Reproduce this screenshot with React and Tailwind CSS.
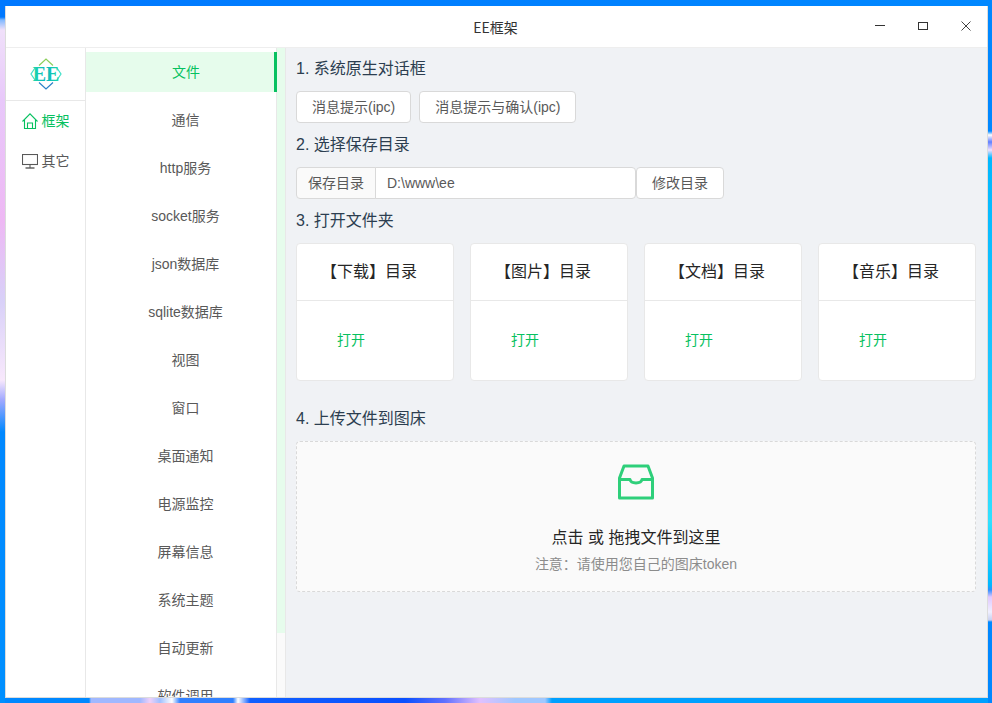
import React from 'react';

const FONT = "font-['Liberation_Sans','Noto_Sans_CJK_SC',sans-serif]";

const MENU = ['文件', '通信', 'http服务', 'socket服务', 'json数据库', 'sqlite数据库', '视图', '窗口', '桌面通知', '电源监控', '屏幕信息', '系统主题', '自动更新', '软件调用'];
const FOLDERS = ['【下载】目录', '【图片】目录', '【文档】目录', '【音乐】目录'];

const Logo = () => (
    <svg width="32" height="32" viewBox="0 0 32 32" fill="none">
        <defs>
            <linearGradient id="ee" x1="0" y1="0" x2="1" y2="0">
                <stop offset="0" stopColor="#20d8a8" />
                <stop offset="0.5" stopColor="#08b8c0" />
                <stop offset="1" stopColor="#20d8a8" />
            </linearGradient>
        </defs>
        <path d="M9 7.500 L16 1 L23 7.500" stroke="#8ccf5c" strokeWidth="1.200" />
        <path d="M9 24.500 L16 31 L23 24.500" stroke="#2a80c8" strokeWidth="1.200" />
        <path d="M5 10 L1 16 L5 22" stroke="#3fe0c8" strokeWidth="1.200" />
        <path d="M27 10 L31 16 L27 22" stroke="#3fe0c8" strokeWidth="1.200" />
        <text x="16" y="23" textAnchor="middle" fontFamily="Liberation Serif, serif" fontWeight="700" fontSize="20" fill="url(#ee)">EE</text>
    </svg>
);

const HomeIcon = () => (
    <svg width="16" height="16" viewBox="0 0 16 16" fill="none" stroke="currentColor" strokeWidth="1.100">
        <path d="M.5 8.500 L8 .8 L15.500 8.500" />
        <path d="M2.500 7 V15.500 H13.500 V7" />
        <path d="M5.500 15.500 V10 H10.500 V15.500" />
    </svg>
);

const DesktopIcon = () => (
    <svg width="16" height="15" viewBox="0 0 16 15" fill="none" stroke="currentColor" strokeWidth="1.100">
        <rect x=".5" y=".5" width="15" height="10" />
        <path d="M8 10.500 V14" />
        <path d="M3.500 14 H12.500" strokeWidth="1.400" />
    </svg>
);

const InboxIcon = () => (
    <svg width="36" height="36" viewBox="0 0 36 36" fill="none" stroke="#2ecf7a" strokeWidth="3" strokeLinejoin="round" className="block">
        <path d="M6 2 H30 L34.500 14 V34 H1.500 V14 Z" />
        <path d="M1.500 15.500 H12 C13 20 23 20 24 15.500 H34.500" />
    </svg>
);

const SectionTitle = ({ children }) => (
    <div className="text-base leading-6 text-[#2c3e50]">{children}</div>
);

const Btn = ({ children }) => (
    <button className="h-8 px-[15px] bg-white border border-[#d9d9d9] rounded text-sm text-[#595959] whitespace-nowrap">
        {children}
    </button>
);

export default function App() {
    return (
        <div className={`w-[992px] h-[703px] overflow-hidden flex ${FONT}`}>
            {/* wallpaper, left edge */}
            <div className="w-[5px] shrink-0 bg-[linear-gradient(180deg,#0078ff_0,#0078ff_17px,#80b8ff_20px,#f0e0fa_30px,#e8c8fa_100px,#eeb8f4_220px,#d8d0f8_300px,#f8e8fc_380px,#a0a8ff_400px,#0088ff_432px,#0090ff_703px)]" />
            <div className="flex-1 min-w-0 flex flex-col">
                <div className="h-[6px] shrink-0 bg-[linear-gradient(90deg,#0078ff,#0088ff)]" />
                {/* window */}
                <div className="flex-1 min-h-0 flex flex-col overflow-hidden bg-white border-x border-b border-[#dcdcdc]">
                    <div className="h-[42px] shrink-0 relative flex items-center justify-center pr-[2px] bg-white border-b border-[#eeeeee] text-sm text-[#333333] font-['Noto_Sans_CJK_SC',sans-serif]">
                        EE框架
                        <div className="absolute right-0 top-0 h-full flex items-center">
                            <div className="w-[43px] flex justify-center -translate-y-[1px]"><div className="w-[10px] h-px bg-[#333333]" /></div>
                            <div className="w-[43px] flex justify-center -translate-y-[1px]"><div className="w-[10px] h-[8px] border border-[#333333]" /></div>
                            <div className="w-[43px] flex justify-center -translate-y-[1px]">
                                <svg width="10" height="10" viewBox="0 0 10 10" stroke="#444444" strokeWidth="1"><path d="M.5.5l9 9M9.500.5l-9 9" /></svg>
                            </div>
                        </div>
                    </div>
                    <div className="flex-1 min-h-0 flex">
                        {/* first column */}
                        <div className="w-[80px] shrink-0 border-r border-[#e8e8e8]">
                            <div className="h-[53px] flex items-center justify-center border-b border-[#e8e8e8]"><Logo /></div>
                            <div className="h-10 flex items-center justify-center gap-1 text-sm text-[#07c160]">
                                <HomeIcon />框架
                            </div>
                            <div className="h-10 flex items-center justify-center gap-1 text-sm text-[#595959]">
                                <DesktopIcon />其它
                            </div>
                        </div>
                        {/* second column */}
                        <div className="w-[200px] shrink-0 flex overflow-hidden border-r border-[#e8e8e8]">
                            <div className="w-[191px] shrink-0 pt-1 shadow-[inset_-1px_0_0_#e8e8e8] overflow-hidden">
                                {MENU.map((m, i) => (
                                    <div
                                        key={m}
                                        className={i === 0
                                            ? 'h-10 mb-2 pl-[12px] flex items-center justify-center text-sm text-[#07c160] bg-[#e6fcec] border-r-[3px] border-[#07c160]'
                                            : 'h-10 mb-2 pl-[8px] flex items-center justify-center text-sm text-[#595959]'}
                                    >
                                        {m}
                                    </div>
                                ))}
                            </div>
                            <div className="w-[8px] shrink-0 bg-[#fafafa]"><div className="h-[585px] bg-[#e6fcec]" /></div>
                        </div>
                        {/* content */}
                        <div className="flex-1 min-w-0 bg-[#f0f2f5] px-[10px] pt-[9px]">
                            <SectionTitle>1. 系统原生对话框</SectionTitle>
                            <div className="mt-[10px] flex gap-2"><Btn>消息提示(ipc)</Btn><Btn>消息提示与确认(ipc)</Btn></div>
                            <div className="mt-[10px]"><SectionTitle>2. 选择保存目录</SectionTitle></div>
                            <div className="mt-[10px] flex">
                                <div className="h-8 w-[80px] flex items-center justify-center bg-[#fafafa] border border-[#d9d9d9] rounded-l text-sm text-[#595959]">保存目录</div>
                                <div className="h-8 w-[261px] -ml-px flex items-center pl-[11px] bg-white border border-[#d9d9d9] rounded-r text-sm text-[#595959]">D:\www\ee</div>
                                <Btn>修改目录</Btn>
                            </div>
                            <div className="mt-[10px]"><SectionTitle>3. 打开文件夹</SectionTitle></div>
                            <div className="mt-[10px] flex gap-4">
                                {FOLDERS.map(f => (
                                    <div key={f} className="w-[158px] h-[138px] bg-white border border-[#e8e8e8] rounded-sm">
                                        <div className="h-[57px] pr-3 flex items-center justify-center border-b border-[#e8e8e8] text-base text-[#262626]">{f}</div>
                                        <div className="pl-10 pt-[29px] text-sm leading-[20px] text-[#07c160]">打开</div>
                                    </div>
                                ))}
                            </div>
                            <div className="mt-[26px]"><SectionTitle>4. 上传文件到图床</SectionTitle></div>
                            <div className="mt-[10px] h-[151px] w-[680px] flex flex-col items-center bg-[#fafafa] border border-dashed border-[#d9d9d9] rounded-sm">
                                <div className="mt-[22px]"><InboxIcon /></div>
                                <div className="mt-[26px] text-base leading-6 text-[#262626]">点击 或 拖拽文件到这里</div>
                                <div className="mt-[4px] text-sm leading-[20px] text-[#8c8c8c]">注意：请使用您自己的图床token</div>
                            </div>
                        </div>
                    </div>
                </div>
                {/* wallpaper, bottom edge */}
                <div className="h-[5px] shrink-0 bg-[linear-gradient(90deg,#0088ff_0,#0088ff_84px,#a0b8ff_86px,#a0b8ff_135px,#f0d0f8_145px,#a0c0ff_155px,#ffffff_167px,#3080ff_175px,#3080ff_228px,#ffffff_233px,#1060ff_245px,#0a50ff_400px,#6070ff_440px,#e0c0ff_475px,#a0c8ff_510px,#a0c8ff_540px,#00a0ff_547px,#00a0ff_992px)]" />
            </div>
            {/* wallpaper, right edge */}
            <div className="w-[4px] shrink-0 bg-[linear-gradient(180deg,#0088ff_0,#0088ff_131px,#ffffff_135px,#6080ff_142px,#f0e0ff_150px,#00b8ff_158px,#20c8ff_400px,#30e0ff_520px,#00b8ff_585px,#3090ff_590px,#e0c8ff_597px,#f0f0ff_612px,#c8d0f0_620px,#0088ff_622px,#0088ff_703px)]" />
        </div>
    );
}
